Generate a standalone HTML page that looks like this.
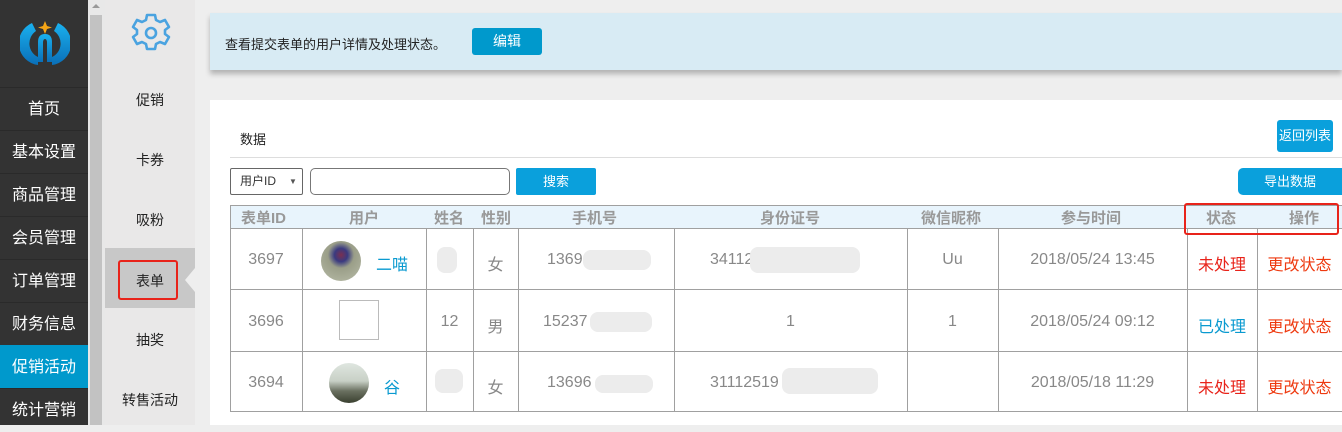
<!DOCTYPE html>
<html><head><meta charset="utf-8">
<style>
*{margin:0;padding:0;box-sizing:border-box}
body{width:1342px;height:425px;overflow:hidden;background:#eee;font-family:"Liberation Sans","Noto Sans CJK SC",sans-serif;position:relative}
.a{position:absolute}
.nav{left:0;top:0;width:88px;height:425px;background:#333}
.nav div.it{position:absolute;left:0;width:88px;height:43px;border-top:1px solid #2a2a2a;color:#fff;font-size:16px;text-align:center;line-height:43px}
.sb{left:88px;top:0;width:17px;height:425px;background:#e8e8e8}
.sub{left:105px;top:0;width:90px;height:425px;background:#e9e8e8}
.sub div.s{position:absolute;left:0;width:90px;text-align:center;font-size:14px;color:#222}
.c{text-align:center}
.vl{position:absolute;width:1px;background:#a0a0a0}
.hl{position:absolute;height:1px;background:#a0a0a0}
.t{position:absolute;font-size:16px;color:#888;text-align:center;margin-top:1px}
.h{position:absolute;font-size:15px;color:#999;font-weight:bold;top:207px}
.blur{position:absolute;background:#ececec;border-radius:8px}
</style></head><body>
<div class="a nav">
  <svg class="a" style="left:20px;top:18px" width="50" height="50" viewBox="0 0 50 50">
    <defs><linearGradient id="g" x1="0" y1="0" x2="0" y2="1"><stop offset="0" stop-color="#1ab0ee"/><stop offset="1" stop-color="#0a6fb8"/></linearGradient></defs>
    <path d="M12 5 A22 22 0 0 0 18 47 L18 39 A15 15 0 0 1 16 13 Z" fill="url(#g)"/>
    <path d="M38 5 A22 22 0 0 1 32 47 L32 39 A15 15 0 0 0 34 13 Z" fill="url(#g)"/>
    <path d="M18 44 L18 24 Q18 16 25 16 Q32 16 32 24 L32 44 L27 44 L27 25 Q27 21 25 21 Q23 21 23 25 L23 44 Z" fill="url(#g)"/>
    <path d="M25 3 L27 8 L32 9.5 L27 11 L25 16 L23 11 L18 9.5 L23 8 Z" fill="#f5a516"/>
  </svg>
  <div class="it" style="top:87px">首页</div>
  <div class="it" style="top:130px">基本设置</div>
  <div class="it" style="top:173px">商品管理</div>
  <div class="it" style="top:216px">会员管理</div>
  <div class="it" style="top:259px">订单管理</div>
  <div class="it" style="top:302px">财务信息</div>
  <div class="it" style="top:345px;background:#0099cc;border-top-color:#0099cc">促销活动</div>
  <div class="it" style="top:388px">统计营销</div>
</div>
<div class="a sb"><div class="a" style="left:2px;top:15px;width:12px;height:410px;background:#c2c2c2"></div><div class="a" style="left:4px;top:4px;width:0;height:0;border-left:4px solid transparent;border-right:4px solid transparent;border-bottom:4px solid #999"></div></div>
<div class="a sub">
  <svg class="a" style="left:25px;top:12px" width="42" height="42" viewBox="0 0 42 42"><path d="M17 3h8l1 5 4 2 5-2 4 7-4 3v4l4 3-4 7-5-2-4 2-1 5h-8l-1-5-4-2-5 2-4-7 4-3v-4l-4-3 4-7 5 2 4-2z" fill="none" stroke="#4aa3e0" stroke-width="2.6" stroke-linejoin="round"/><circle cx="21" cy="21" r="5" fill="none" stroke="#4aa3e0" stroke-width="2.6"/></svg>
  <div class="s" style="top:90px">促销</div>
  <div class="s" style="top:150px">卡券</div>
  <div class="s" style="top:210px">吸粉</div>
  <div class="a" style="left:0;top:248px;width:90px;height:60px;background:#c8c8c8"></div>
  <div class="a" style="left:13px;top:260px;width:60px;height:40px;border:2px solid #e8231a;border-radius:3px"></div>
  <div class="s" style="top:271px">表单</div>
  <div class="a" style="left:80px;top:268px;width:0;height:0;border-top:12px solid transparent;border-bottom:12px solid transparent;border-right:10px solid #eee"></div>
  <div class="s" style="top:330px">抽奖</div>
  <div class="s" style="top:390px">转售活动</div>
</div>
<div class="a" style="left:210px;top:13px;width:1132px;height:57px;background:#d8ebf4;box-shadow:0 4px 5px rgba(0,0,0,.25)"></div>
<div class="a" style="left:225px;top:34px;font-size:13px;color:#222">查看提交表单的用户详情及处理状态。</div>
<div class="a c" style="left:472px;top:28px;width:70px;height:27px;background:#0099cc;border-radius:3px;color:#fff;font-size:14px;line-height:27px">编辑</div>
<div class="a" style="left:210px;top:100px;width:1132px;height:325px;background:#fff"></div>
<div class="a" style="left:240px;top:129px;font-size:13px;color:#222">数据</div>
<div class="a" style="left:230px;top:157px;width:1112px;height:1px;background:#ddd"></div>
<div class="a c" style="left:1277px;top:120px;width:56px;height:32px;background:#0aa0dc;border-radius:3px;color:#fff;font-size:13px;line-height:32px;white-space:nowrap;overflow:hidden">返回列表</div>
<div class="a" style="left:230px;top:168px;width:73px;height:27px;border:1px solid #666;border-radius:2px;font-size:12px;color:#333;line-height:25px;padding-left:9px">用户ID<span style="position:absolute;left:58px;top:0;font-size:8px;color:#555">▼</span></div>
<div class="a" style="left:310px;top:168px;width:200px;height:27px;border:1px solid #777;border-radius:5px"></div>
<div class="a c" style="left:516px;top:168px;width:80px;height:27px;background:#0aa0dc;border-radius:2px;color:#fff;font-size:13px;line-height:27px">搜索</div>
<div class="a c" style="left:1238px;top:168px;width:104px;height:27px;background:#0aa0dc;border-radius:5px 0 0 5px;color:#fff;font-size:13px;line-height:27px">导出数据</div>
<div class="a" style="left:230px;top:205px;width:1112px;height:23px;background:#e8f4fc"></div>
<div class="hl" style="left:230px;top:205px;width:1112px"></div>
<div class="hl" style="left:230px;top:228px;width:1112px"></div>
<div class="hl" style="left:230px;top:289px;width:1112px"></div>
<div class="hl" style="left:230px;top:351px;width:1112px"></div>
<div class="hl" style="left:230px;top:411px;width:1112px"></div>
<div class="vl" style="left:230px;top:205px;height:207px"></div>
<div class="vl" style="left:302px;top:228px;height:184px"></div>
<div class="vl" style="left:426px;top:228px;height:184px"></div>
<div class="vl" style="left:473px;top:228px;height:184px"></div>
<div class="vl" style="left:518px;top:228px;height:184px"></div>
<div class="vl" style="left:674px;top:228px;height:184px"></div>
<div class="vl" style="left:907px;top:228px;height:184px"></div>
<div class="vl" style="left:998px;top:228px;height:184px"></div>
<div class="vl" style="left:1187px;top:228px;height:184px"></div>
<div class="vl" style="left:1257px;top:228px;height:184px"></div>
<div class="h" style="left:241px">表单ID</div>
<div class="h" style="left:349px">用户</div>
<div class="h" style="left:434px">姓名</div>
<div class="h" style="left:481px">性别</div>
<div class="h" style="left:572px">手机号</div>
<div class="h" style="left:760px">身份证号</div>
<div class="h" style="left:921px">微信昵称</div>
<div class="h" style="left:1061px">参与时间</div>
<div class="h" style="left:1206px">状态</div>
<div class="h" style="left:1289px">操作</div>
<div class="a" style="left:1184px;top:203px;width:155px;height:32px;border:2px solid #e8231a;border-radius:3px"></div>
<div class="t" style="left:230px;top:250px;width:72px">3697</div>
<div class="a" style="left:321px;top:241px;width:40px;height:40px;border-radius:50%;background:radial-gradient(circle at 50% 35%,#7a3050 0,#3a3a80 20%,#9a9e88 40%,#b8bca8 100%)"></div>
<div class="t" style="left:376px;top:250px;color:#0a9ad0">二喵</div>
<div class="blur" style="left:437px;top:247px;width:20px;height:26px"></div>
<div class="t" style="left:473px;top:250px;width:45px">女</div>
<div class="t" style="left:547px;top:250px">1369</div>
<div class="blur" style="left:583px;top:250px;width:68px;height:20px"></div>
<div class="t" style="left:710px;top:250px">34112</div>
<div class="blur" style="left:750px;top:247px;width:110px;height:26px"></div>
<div class="t" style="left:907px;top:250px;width:91px">Uu</div>
<div class="t" style="left:998px;top:250px;width:189px">2018/05/24 13:45</div>
<div class="t" style="left:1187px;top:250px;width:70px;color:#e8231a">未处理</div>
<div class="t" style="left:1257px;top:250px;width:85px;color:#ee3a10">更改状态</div>
<div class="t" style="left:230px;top:312px;width:72px">3696</div>
<div class="a" style="left:339px;top:300px;width:40px;height:40px;border:1px solid #bbb"></div>
<div class="t" style="left:426px;top:312px;width:47px">12</div>
<div class="t" style="left:473px;top:312px;width:45px">男</div>
<div class="t" style="left:543px;top:312px">15237</div>
<div class="blur" style="left:590px;top:312px;width:62px;height:20px"></div>
<div class="t" style="left:674px;top:312px;width:233px">1</div>
<div class="t" style="left:907px;top:312px;width:91px">1</div>
<div class="t" style="left:998px;top:312px;width:189px">2018/05/24 09:12</div>
<div class="t" style="left:1187px;top:312px;width:70px;color:#0a9ad0">已处理</div>
<div class="t" style="left:1257px;top:312px;width:85px;color:#ee3a10">更改状态</div>
<div class="t" style="left:230px;top:373px;width:72px">3694</div>
<div class="a" style="left:329px;top:363px;width:40px;height:40px;border-radius:50%;background:linear-gradient(#dfe6e0 0,#c8d0c6 45%,#6a7060 70%,#3a4030 100%)"></div>
<div class="t" style="left:384px;top:373px;color:#0a9ad0">谷</div>
<div class="blur" style="left:435px;top:369px;width:28px;height:24px"></div>
<div class="t" style="left:473px;top:373px;width:45px">女</div>
<div class="t" style="left:547px;top:373px">13696</div>
<div class="blur" style="left:595px;top:375px;width:58px;height:18px"></div>
<div class="t" style="left:710px;top:373px">31112519</div>
<div class="blur" style="left:782px;top:368px;width:96px;height:26px"></div>
<div class="t" style="left:998px;top:373px;width:189px">2018/05/18 11:29</div>
<div class="t" style="left:1187px;top:373px;width:70px;color:#e8231a">未处理</div>
<div class="t" style="left:1257px;top:373px;width:85px;color:#ee3a10">更改状态</div>
</body></html>
